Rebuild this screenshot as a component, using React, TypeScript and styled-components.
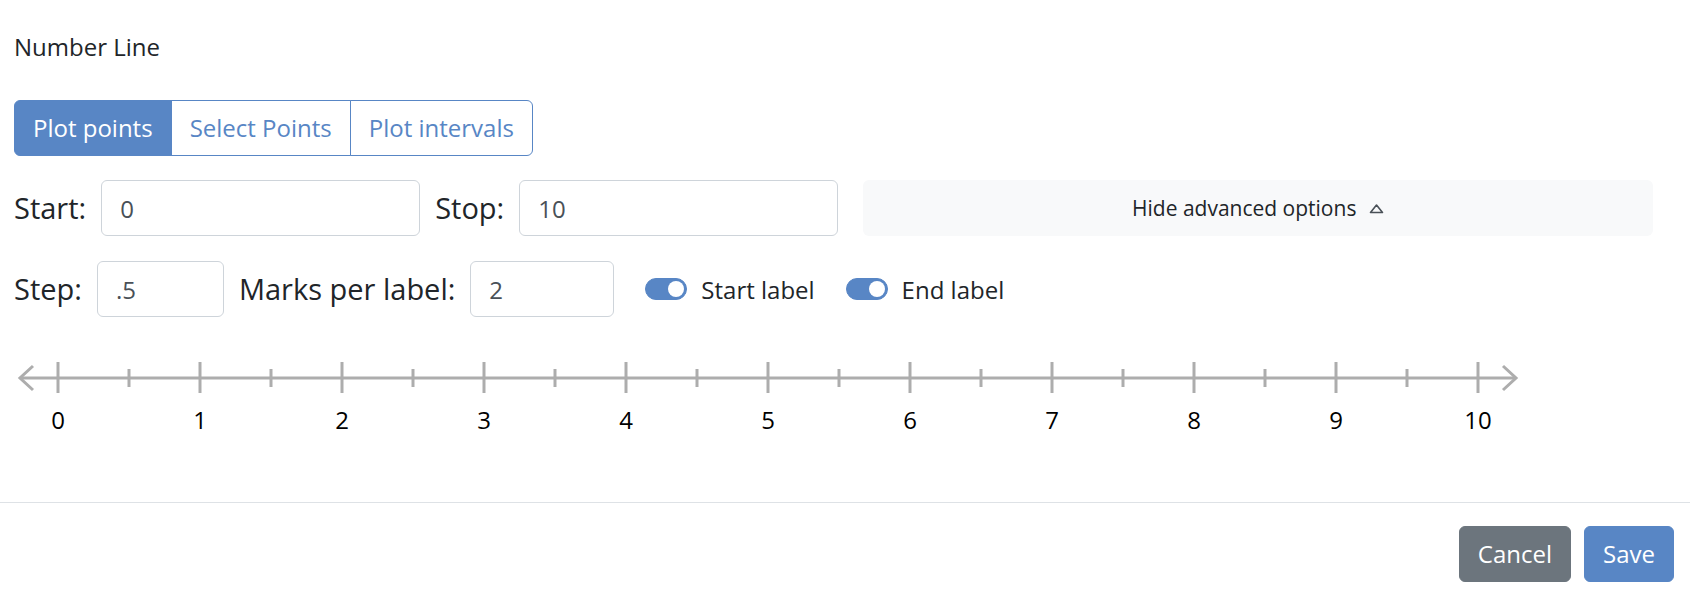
import styled, { createGlobalStyle } from "styled-components";
import { useState } from "react";

const GlobalStyle = createGlobalStyle`
    body {
        margin: 0;
        font-family: "Open Sans", "Noto Sans", sans-serif;
        color: #212529;
        background: #fff;
    }
    * { box-sizing: border-box; }
`;

const BLUE = "#5886c5";

const Page = styled.div`
    width: 1690px;
    height: 597px;
    display: flex;
    flex-direction: column;
`;

const Body = styled.div`
    flex: 1;
    padding: 29px 14px 0 14px;
    display: flex;
    flex-direction: column;
`;

const Title = styled.div`
    font-size: 24px;
    line-height: 36px;
    margin-bottom: 35px;
`;

const Tabs = styled.div`
    display: flex;
    align-self: flex-start;
    margin-bottom: 24px;
`;

const Tab = styled.button<{ active?: boolean }>`
    font-family: inherit;
    font-size: 24px;
    line-height: 36px;
    padding: 9px 18px;
    border: 1px solid ${BLUE};
    margin-left: -1px;
    background: ${p => p.active ? BLUE : "#fff"};
    color: ${p => p.active ? "#fff" : BLUE};
    cursor: pointer;

    &:first-child {
        margin-left: 0;
        border-radius: 6px 0 0 6px;
    }
    &:last-child {
        border-radius: 0 6px 6px 0;
    }
`;

const Row = styled.div<{ gap?: number }>`
    display: flex;
    align-items: center;
    gap: ${p => p.gap ?? 15}px;
    height: 56px;
    margin-bottom: 25px;
`;

const Label = styled.label`
    font-size: 29px;
    line-height: 40px;
    color: #212529;
`;

const Input = styled.input<{ w: number }>`
    width: ${p => p.w}px;
    height: 56px;
    font-family: inherit;
    font-size: 24px;
    padding: 0 18px;
    color: #495057;
    border: 1px solid #ced4da;
    border-radius: 6px;
    outline: none;
`;

const Advanced = styled.button`
    margin-left: 10px;
    width: 790px;
    height: 56px;
    border: none;
    border-radius: 6px;
    background: #f8f9fa;
    font-family: inherit;
    font-size: 21px;
    color: #212529;
    display: flex;
    align-items: center;
    justify-content: center;
    gap: 13px;
    cursor: pointer;
`;

const SwitchGroup = styled.label<{ ml: number }>`
    display: flex;
    align-items: center;
    gap: 14px;
    margin-left: ${p => p.ml}px;
    font-size: 24px;
    color: #212529;
    cursor: pointer;
`;

const Track = styled.span<{ on: boolean }>`
    width: 42px;
    height: 22px;
    border-radius: 11px;
    background: ${p => p.on ? BLUE : "#fff"};
    border: 1px solid ${p => p.on ? BLUE : "#ced4da"};
    display: flex;
    align-items: center;
    justify-content: ${p => p.on ? "flex-end" : "flex-start"};
    padding: 0 2px;
`;

const Knob = styled.span<{ on: boolean }>`
    width: 16px;
    height: 16px;
    border-radius: 50%;
    background: ${p => p.on ? "#fff" : "#ced4da"};
`;

const LineWrap = styled.div`
    margin-top: -5px;
`;

const Footer = styled.div`
    border-top: 1px solid #dee2e6;
    display: flex;
    justify-content: flex-end;
    gap: 13px;
    padding: 23px 16px 15px 16px;
`;

const FooterButton = styled.button<{ variant: "secondary" | "primary" }>`
    font-family: inherit;
    font-size: 24px;
    line-height: 36px;
    padding: 9px 18px;
    border: 1px solid ${p => p.variant === "primary" ? BLUE : "#6c757d"};
    background: ${p => p.variant === "primary" ? BLUE : "#6c757d"};
    color: #fff;
    border-radius: 6px;
    cursor: pointer;
`;

function Switch({ on, label, ml, onToggle }: { on: boolean; label: string; ml: number; onToggle: () => void }) {
    return (
        <SwitchGroup ml={ml} onClick={onToggle}>
            <Track on={on}><Knob on={on} /></Track>
            {label}
        </SwitchGroup>
    );
}

function NumberLine({ start, stop, step, marksPerLabel }: { start: number; stop: number; step: number; marksPerLabel: number }) {
    const x0 = 44;
    const unit = 71;
    const y = 41;
    const count = Math.round((stop - start) / step);
    const stroke = "#adadad";
    const ticks = [];
    for (let i = 0; i <= count; i++) {
        const x = x0 + i * unit;
        const major = i % marksPerLabel === 0;
        ticks.push(
            <line key={"t" + i} x1={x} x2={x} y1={major ? y - 16 : y - 9} y2={major ? y + 15 : y + 9} stroke={stroke} strokeWidth={3} />
        );
        if (major) {
            ticks.push(
                <text key={"l" + i} x={x} y={92} textAnchor="middle" fontSize={24} fontFamily="Open Sans, sans-serif" fill="#000">
                    {start + i * step}
                </text>
            );
        }
    }
    const end = x0 + count * unit + 38;
    return (
        <svg width={1560} height={130}>
            <line x1={6} x2={end} y1={y} y2={y} stroke={stroke} strokeWidth={3} />
            <polyline points={`19,${y - 12} 6,${y} 19,${y + 12}`} fill="none" stroke={stroke} strokeWidth={3} />
            <polyline points={`${end - 13},${y - 12} ${end},${y} ${end - 13},${y + 12}`} fill="none" stroke={stroke} strokeWidth={3} />
            {ticks}
        </svg>
    );
}

export default function App() {
    const [mode, setMode] = useState("plot");
    const [startLabel, setStartLabel] = useState(true);
    const [endLabel, setEndLabel] = useState(true);

    return (
        <Page>
            <GlobalStyle />
            <Body>
                <Title>Number Line</Title>
                <Tabs>
                    <Tab active={mode === "plot"} onClick={() => setMode("plot")}>Plot points</Tab>
                    <Tab active={mode === "select"} onClick={() => setMode("select")}>Select Points</Tab>
                    <Tab active={mode === "intervals"} onClick={() => setMode("intervals")}>Plot intervals</Tab>
                </Tabs>
                <Row>
                    <Label>Start:</Label>
                    <Input w={319} defaultValue="0" />
                    <Label>Stop:</Label>
                    <Input w={319} defaultValue="10" />
                    <Advanced>
                        Hide advanced options
                        <svg width="15" height="11" viewBox="0 0 15 11">
                            <polygon points="1.5,9.5 7.5,2 13.5,9.5" fill="none" stroke="#495057" strokeWidth="1.6" strokeLinejoin="round" />
                        </svg>
                    </Advanced>
                </Row>
                <Row>
                    <Label>Step:</Label>
                    <Input w={127} defaultValue=".5" />
                    <Label>Marks per label:</Label>
                    <Input w={144} defaultValue="2" />
                    <Switch on={startLabel} label="Start label" ml={16} onToggle={() => setStartLabel(!startLabel)} />
                    <Switch on={endLabel} label="End label" ml={16} onToggle={() => setEndLabel(!endLabel)} />
                </Row>
                <LineWrap>
                    <NumberLine start={0} stop={10} step={0.5} marksPerLabel={2} />
                </LineWrap>
            </Body>
            <Footer>
                <FooterButton variant="secondary">Cancel</FooterButton>
                <FooterButton variant="primary">Save</FooterButton>
            </Footer>
        </Page>
    );
}
